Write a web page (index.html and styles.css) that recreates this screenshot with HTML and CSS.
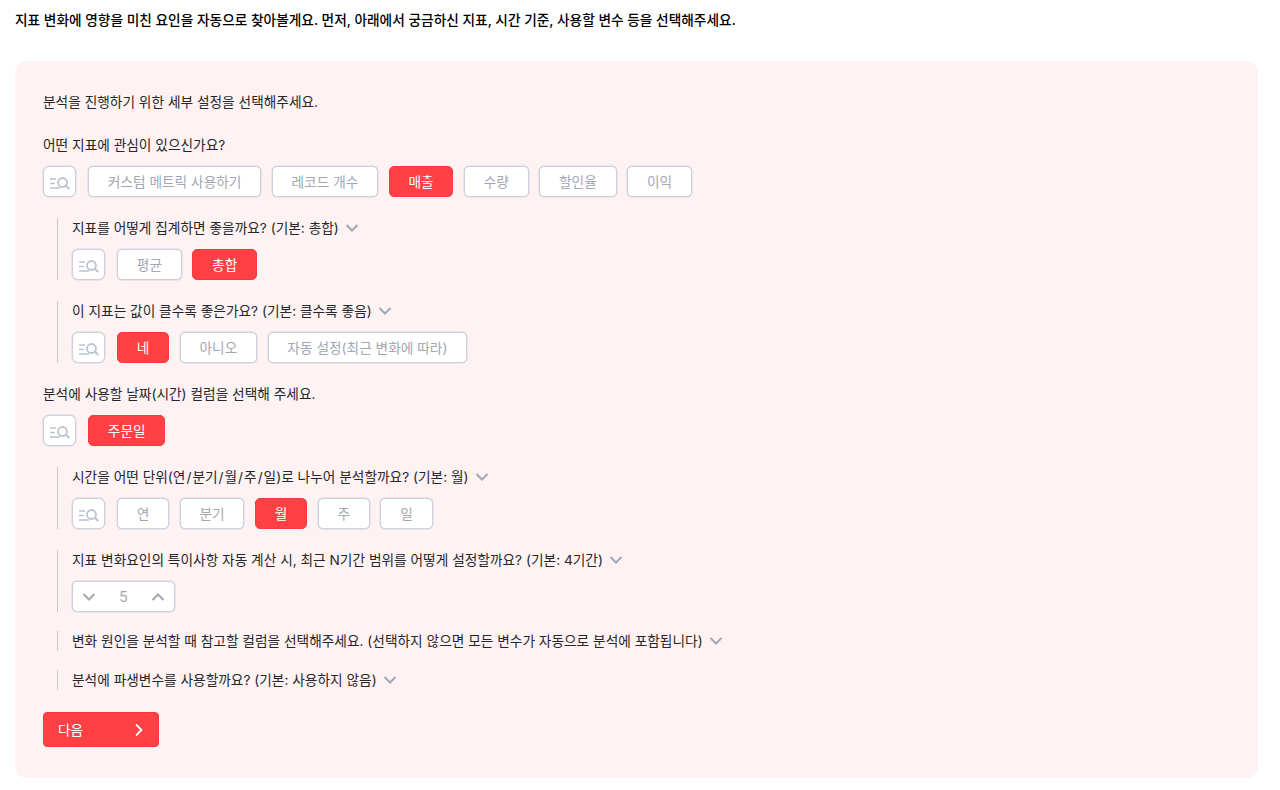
FILE: index.html
```html
<!DOCTYPE html>
<html lang="ko">
<head>
<meta charset="utf-8">
<title>분석 설정</title>
<link rel="stylesheet" href="styles.css">
</head>
<body>
<svg class="defs" width="0" height="0" aria-hidden="true">
  <symbol id="find" viewBox="0 0 32 29">
    <path d="M6 12h6M6 16.500h5M6 21h10" fill="none" stroke="currentColor" stroke-width="1.400"/>
    <circle cx="18.500" cy="15.500" r="4.500" fill="none" stroke="currentColor" stroke-width="1.800"/>
    <path d="M21.800 18.800l3 2.700" fill="none" stroke="currentColor" stroke-width="2" stroke-linecap="round"/>
  </symbol>
  <symbol id="down" viewBox="0 0 14 10">
    <path d="M1.500 2l5.500 5.500L12.500 2" fill="none" stroke="currentColor" stroke-width="2"/>
  </symbol>
</svg>
<p class="lead">지표 변화에 영향을 미친 요인을 자동으로 찾아볼게요. 먼저, 아래에서 궁금하신 지표, 시간 기준, 사용할 변수 등을 선택해주세요.</p>
<main class="panel">
  <p class="intro">분석을 진행하기 위한 세부 설정을 선택해주세요.</p>

  <section class="group">
    <p class="label">어떤 지표에 관심이 있으신가요?</p>
    <div class="choices">
      <button class="icon-btn"><svg class="find"><use href="#find"/></svg></button>
      <button class="chip">커스텀 메트릭 사용하기</button>
      <button class="chip">레코드 개수</button>
      <button class="chip on">매출</button>
      <button class="chip">수량</button>
      <button class="chip">할인율</button>
      <button class="chip">이익</button>
    </div>
  </section>

  <section class="sub">
    <p class="label">지표를 어떻게 집계하면 좋을까요? (기본: 총합)<svg class="caret"><use href="#down"/></svg></p>
    <div class="choices">
      <button class="icon-btn"><svg class="find"><use href="#find"/></svg></button>
      <button class="chip">평균</button>
      <button class="chip on">총합</button>
    </div>
  </section>

  <section class="sub">
    <p class="label">이 지표는 값이 클수록 좋은가요? (기본: 클수록 좋음)<svg class="caret"><use href="#down"/></svg></p>
    <div class="choices">
      <button class="icon-btn"><svg class="find"><use href="#find"/></svg></button>
      <button class="chip on">네</button>
      <button class="chip">아니오</button>
      <button class="chip">자동 설정(최근 변화에 따라)</button>
    </div>
  </section>

  <section class="group">
    <p class="label">분석에 사용할 날짜(시간) 컬럼을 선택해 주세요.</p>
    <div class="choices">
      <button class="icon-btn"><svg class="find"><use href="#find"/></svg></button>
      <button class="chip on">주문일</button>
    </div>
  </section>

  <section class="sub">
    <p class="label"><span>시간을 어떤 단위(연<span class="slash">/</span>분기<span class="slash">/</span>월<span class="slash">/</span>주<span class="slash">/</span>일)로 나누어 분석할까요? (기본: 월)</span><svg class="caret"><use href="#down"/></svg></p>
    <div class="choices">
      <button class="icon-btn"><svg class="find"><use href="#find"/></svg></button>
      <button class="chip">연</button>
      <button class="chip">분기</button>
      <button class="chip on">월</button>
      <button class="chip">주</button>
      <button class="chip">일</button>
    </div>
  </section>

  <section class="sub tight">
    <p class="label">지표 변화요인의 특이사항 자동 계산 시, 최근 N기간 범위를 어떻게 설정할까요? (기본: 4기간)<svg class="caret"><use href="#down"/></svg></p>
    <div class="stepper">
      <svg class="step"><use href="#down"/></svg>
      <span class="value">5</span>
      <svg class="step up"><use href="#down"/></svg>
    </div>
  </section>

  <section class="sub tight">
    <p class="label">변화 원인을 분석할 때 참고할 컬럼을 선택해주세요. (선택하지 않으면 모든 변수가 자동으로 분석에 포함됩니다)<svg class="caret"><use href="#down"/></svg></p>
  </section>

  <section class="sub tight">
    <p class="label">분석에 파생변수를 사용할까요? (기본: 사용하지 않음)<svg class="caret"><use href="#down"/></svg></p>
  </section>

  <button class="next">다음
    <svg class="next-arrow" viewBox="0 0 10 14"><path d="M2 1.500L7.500 7 2 12.500" fill="none" stroke="currentColor" stroke-width="1.800"/></svg>
  </button>
</main>
</body>
</html>
```

FILE: styles.css
```css
* { box-sizing: border-box; }
html, body { margin: 0; padding: 0; }
body {
  background: #fff;
  color: #25262b;
  font-family: "Inter", "Noto Sans CJK KR", sans-serif;
  font-size: 13.700px;
  line-height: 20px;
  padding: 10px 22px 0 15px;
}
p { margin: 0; }
.defs { position: absolute; }
.lead {
  color: #000;
  font-weight: 500;
  margin-bottom: 31px;
}
.panel {
  background: #fef2f2;
  border-radius: 12px;
  height: 717px;
  padding: 31px 28px 0;
}
.intro { margin-bottom: 23px; }
.group { margin-bottom: 21px; }
.sub {
  border-left: 1px solid #c8c9ce;
  margin: 0 0 21px 14px;
  padding-left: 14px;
}
.sub.tight { margin-bottom: 19px; }
.label { display: flex; align-items: center; height: 20px; }
.slash { padding: 0 1px; }
.choices { display: flex; gap: 10.500px; margin-top: 11px; }
.chip, .icon-btn, .stepper {
  background: #fff;
  border: 1px solid #ccd1dc;
  border-radius: 5px;
  height: 31px;
  box-shadow: 0 0 0 .5px #d4d8e2;
}
.chip {
  color: #a2a7b4;
  font: inherit;
  padding: 0 18.800px;
}
.chip.on {
  background: #ff4044;
  border-color: #f4393d;
  box-shadow: none;
  color: #fff;
}
.icon-btn {
  color: #bcc3d1;
  width: 33px;
  padding: 0;
  margin-right: 1.500px;
  border-radius: 6px;
  display: flex;
  align-items: center;
  justify-content: center;
}
.find { width: 32px; height: 29px; flex: none; }
.caret { width: 14px; height: 10px; margin-left: 6px; color: #a2a7b4; }
.stepper {
  width: 103px;
  margin-top: 11px;
  display: flex;
  align-items: center;
  justify-content: space-between;
  padding: 0 8.500px;
  color: #a2a7b4;
}
.step { width: 14px; height: 10px; }
.step.up { transform: rotate(180deg); }
.value { font-size: 14px; }
.next {
  background: #ff4044;
  border: 1px solid #f4393d;
  border-radius: 4px;
  color: #fff;
  font: inherit;
  width: 116px;
  height: 35px;
  padding: 0 14px;
  margin-top: 22px;
  display: flex;
  align-items: center;
  justify-content: space-between;
}
.next-arrow { width: 10px; height: 14px; }
```
